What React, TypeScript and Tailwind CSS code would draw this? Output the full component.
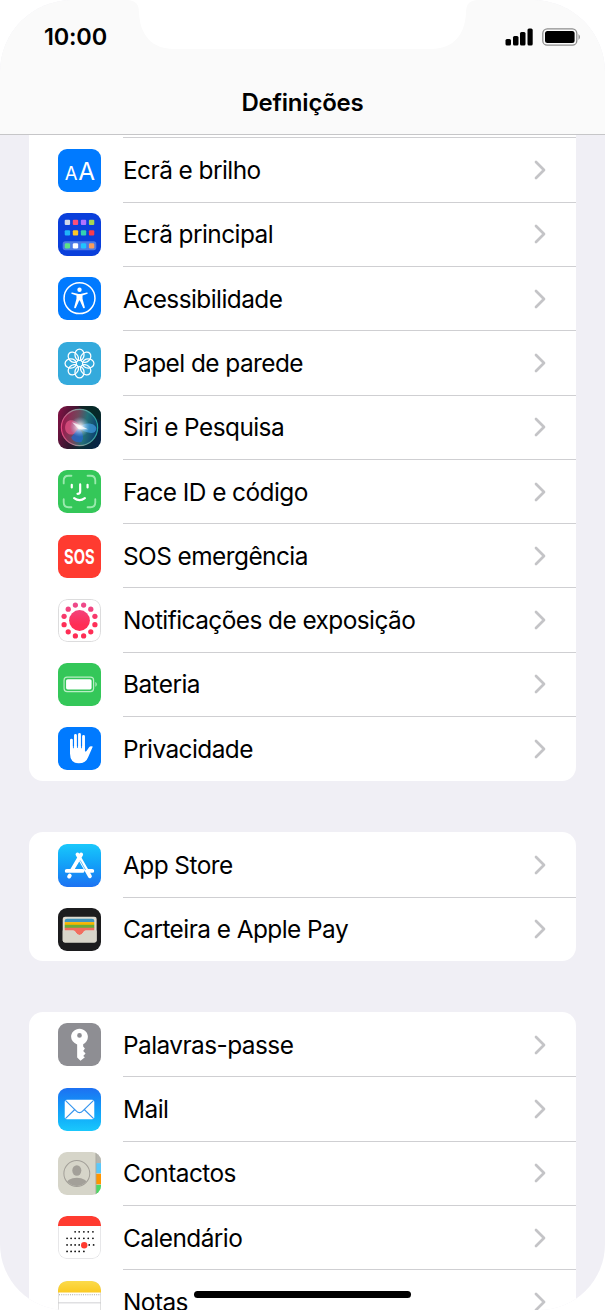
import type { ReactNode } from "react";

function Icon({ children, className = "" }: { children: ReactNode; className?: string }) {
  return (
    <svg viewBox="0 0 128 128" className={`mt-[1.4px] w-[43px] h-[43px] shrink-0 rounded-[9px] ${className}`}>
      {children}
    </svg>
  );
}

function DisplayIcon() {
  return (
    <Icon className="bg-[#007aff]">
      <g fill="#fff" fontFamily="Inter, sans-serif">
        <text x="20" y="91" fontSize="55" textLength="38" lengthAdjust="spacingAndGlyphs">A</text>
        <text x="60" y="91" fontSize="74" textLength="50" lengthAdjust="spacingAndGlyphs">A</text>
      </g>
    </Icon>
  );
}

function HomeScreenIcon() {
  const rows = [
    ["#d0d7e8", "#f8507a", "#b072ff", "#a4d552"],
    ["#20b4fa", "#fcc527", "#35d1b0", "#f83b4c"],
  ];
  return (
    <Icon className="bg-[#0a3fdb]">
      {rows.map((row, y) =>
        row.map((color, x) => (
          <rect key={color} x={20 + x * 24} y={20 + y * 31} width="16" height="16" rx="3" fill={color} />
        ))
      )}
      <rect x="14" y="84" width="100" height="27" rx="8" fill="#4b79e8" />
      <rect x="20" y="90" width="16" height="16" rx="4" fill="#5fe385" />
      <rect x="44" y="90" width="16" height="16" rx="4" fill="#fff" />
      <rect x="68" y="90" width="16" height="16" rx="4" fill="#20c4ff" />
      <rect x="92" y="90" width="16" height="16" rx="4" fill="#fa9d5c" />
    </Icon>
  );
}

function AccessibilityIcon() {
  return (
    <Icon className="bg-[#007aff]">
      <circle cx="64" cy="63" r="46" fill="none" stroke="#fff" strokeWidth="4.5" />
      <circle cx="64" cy="38" r="6.5" fill="#fff" />
      <path
        d="M42 46 L58 50 Q64 51 70 50 L86 46 Q90 46 88 50 L73 55 V65 L80 91 Q79 95 75 92 L65 70 H63 L53 92 Q49 95 48 91 L55 65 V55 L40 50 Q38 46 42 46Z"
        fill="#fff"
      />
    </Icon>
  );
}

function WallpaperIcon() {
  const angles = [0, 45, 90, 135, 180, 225, 270, 315];
  return (
    <Icon className="bg-[#34aadc]">
      {angles.map((a) => (
        <ellipse
          key={a}
          cx="64"
          cy="38"
          rx="13.5"
          ry="17"
          transform={`rotate(${a} 64 64)`}
          fill="none"
          stroke="#fff"
          strokeWidth="3.8"
        />
      ))}
    </Icon>
  );
}

function SiriIcon() {
  return (
    <Icon>
      <defs>
        <linearGradient id="siriBg" x1="0" y1="0.3" x2="1" y2="0.6">
          <stop offset="0" stopColor="#7a1242" />
          <stop offset="0.4" stopColor="#33172f" />
          <stop offset="0.65" stopColor="#0b2e35" />
          <stop offset="1" stopColor="#072546" />
        </linearGradient>
        <linearGradient id="siriRing" x1="0" y1="0.5" x2="1" y2="0.4">
          <stop offset="0" stopColor="#e0487e" />
          <stop offset="0.45" stopColor="#8a9c9c" />
          <stop offset="1" stopColor="#23a6a2" />
        </linearGradient>
        <linearGradient id="siriOrb" x1="0" y1="0.4" x2="1" y2="0.6">
          <stop offset="0" stopColor="#a0174e" />
          <stop offset="0.4" stopColor="#70485c" />
          <stop offset="0.65" stopColor="#237078" />
          <stop offset="1" stopColor="#0a3d70" />
        </linearGradient>
        <radialGradient id="siriGlow">
          <stop offset="0" stopColor="#fff" />
          <stop offset="0.3" stopColor="#fff" stopOpacity="0.65" />
          <stop offset="1" stopColor="#8cf" stopOpacity="0" />
        </radialGradient>
      </defs>
      <rect width="128" height="128" fill="url(#siriBg)" />
      <path d="M60 0 H128 V45 Q90 20 60 0Z" fill="#052a22" opacity="0.7" />
      <circle cx="64" cy="64" r="54" fill="url(#siriOrb)" stroke="url(#siriRing)" strokeWidth="3.5" />
      <path d="M68 64 C52 34 22 36 21 63 C21 92 55 92 68 64Z" fill="#f2588c" opacity="0.65" />
      <path d="M60 64 C82 44 114 52 114 67 C113 88 82 82 60 64Z" fill="#46a5ee" opacity="0.65" />
      <path d="M62 65 Q83 90 70 107 Q48 112 39 94Z" fill="#2268ce" opacity="0.75" />
      <circle cx="65" cy="62" r="30" fill="url(#siriGlow)" />
      <path d="M42 48 L67 58 L89 69 L62 69Z" fill="#fff" opacity="0.75" />
    </Icon>
  );
}

function FaceIdIcon() {
  return (
    <Icon className="bg-[#34c759]">
      <path
        d="M17 40 V31 Q17 17 31 17 H40 M88 17 H97 Q111 17 111 31 V40 M111 87 V96 Q111 111 97 111 H88 M40 111 H31 Q17 111 17 96 V87"
        fill="none"
        stroke="#9beaae"
        strokeWidth="5.5"
        strokeLinecap="round"
      />
      <path
        d="M41 44 V52 M88 44 V52 M66 43 V64 Q66 71 58 71 M48 84 Q64 96 80 84"
        fill="none"
        stroke="#fff"
        strokeWidth="6.5"
        strokeLinecap="round"
      />
    </Icon>
  );
}

function SosIcon() {
  return (
    <Icon className="bg-[#ff3b30]">
      <text
        x="18"
        y="85"
        fontSize="59"
        fontWeight="700"
        fill="#fff"
        fontFamily="Inter, sans-serif"
        textLength="91"
        lengthAdjust="spacingAndGlyphs"
      >
        SOS
      </text>
    </Icon>
  );
}

function ExposureIcon() {
  const dots = Array.from({ length: 12 }, (_, i) => ((i * 30 + 15) * Math.PI) / 180);
  return (
    <Icon>
      <defs>
        <linearGradient id="exposure" x1="0" y1="0" x2="0" y2="128" gradientUnits="userSpaceOnUse">
          <stop offset="0.1" stopColor="#ed4b8d" />
          <stop offset="0.6" stopColor="#ff2d55" />
        </linearGradient>
      </defs>
      <rect x="1.5" y="1.5" width="125" height="125" rx="26" fill="#fff" stroke="#d5d5d7" strokeWidth="2.5" />
      <g fill="url(#exposure)">
        <circle cx="64" cy="64" r="31" />
        {dots.map((a) => (
          <circle key={a} cx={64 + 47.5 * Math.cos(a)} cy={64 + 47.5 * Math.sin(a)} r="7.8" />
        ))}
      </g>
    </Icon>
  );
}

function BatteryIcon() {
  return (
    <Icon className="bg-[#34c759]">
      <rect x="18" y="42" width="88" height="43" rx="9" fill="none" stroke="#b9eec5" strokeWidth="3.5" />
      <rect x="24" y="48" width="76" height="31" rx="5" fill="#fff" />
      <path d="M112 57 Q118 63 112 70Z" fill="#b9eec5" stroke="#b9eec5" />
    </Icon>
  );
}

function PrivacyIcon() {
  return (
    <Icon className="bg-[#007aff]">
      <path
        d="M40 39 V66 M52 25 V66 M64 22 V66 M76 28 V66"
        fill="none"
        stroke="#fff"
        strokeWidth="8.5"
        strokeLinecap="round"
      />
      <path
        d="M35.7 57 H80.2 V73 Q84 74 86 70 L92 61 Q96 55 103 58 Q104 59 102 62 L90 89 Q83 108 62 108 Q36 108 35.7 79Z"
        fill="#fff"
      />
      <path d="M46 42 V62 M58 32 V61 M70 34 V62" stroke="#007aff" strokeWidth="2.5" strokeLinecap="round" />
    </Icon>
  );
}

function AppStoreIcon() {
  return (
    <Icon className="bg-linear-to-b from-[#1bc8fb] to-[#1d72f2]">
      <g fill="none" stroke="#fff" strokeWidth="11.5" strokeLinecap="round">
        <path d="M69 31 L42 77 M58 31 L95 96 M26 80 H73 M90 80 H102 M35 94 L33 97" />
      </g>
      <path d="M66 49 L82 77" stroke="#1ba4f7" strokeWidth="2" />
    </Icon>
  );
}

function WalletIcon() {
  return (
    <Icon className="bg-[#1c1c1e]">
      <rect x="14" y="26" width="101" height="77" rx="7" fill="#dedbd1" />
      <path d="M20 42 V38 Q20 32 27 32 H101 Q108 32 108 38 V42Z" fill="#4196be" />
      <rect x="20" y="42" width="88" height="9" fill="#f7b500" />
      <rect x="20" y="50" width="88" height="10" fill="#69ae38" />
      <path d="M20 59 H108 V67 H83 Q77 67 75 73 Q64 88 53 73 Q51 67 45 67 H20Z" fill="#f26d5f" />
      <path d="M14 67 H45 Q51 67 53 73 Q64 88 75 73 Q77 67 83 67 H115 V96 Q115 103 108 103 H21 Q14 103 14 96Z" fill="#d8d5ca" />
    </Icon>
  );
}

function PasswordsIcon() {
  return (
    <Icon className="bg-[#8e8e93]">
      <path
        fillRule="evenodd"
        d="M64 17 C78 17 89 28 89 41 C89 51 83 59 75 63 V70 L80 76 L75 83 L82 91 L75 98 L80 102 L67 112 L57 103 V64 C46 59 39 51 39 41 C39 28 50 17 64 17Z M64 30 A7 7 0 1 0 64 44 A7 7 0 1 0 64 30Z"
        fill="#fff"
      />
    </Icon>
  );
}

function MailIcon() {
  return (
    <Icon className="bg-linear-to-b from-[#1d70f2] to-[#1ac8fc]">
      <rect x="20" y="35" width="88" height="58" rx="6" fill="#fff" />
      <path
        d="M22 37 L54 68 Q64 78 74 68 L106 37 M22 91 L50 64 M106 91 L78 64"
        fill="none"
        stroke="#3595ee"
        strokeWidth="3.5"
      />
    </Icon>
  );
}

function ContactsIcon() {
  return (
    <Icon className="bg-[#d6d5c9]">
      <defs>
        <clipPath id="person">
          <circle cx="56" cy="64" r="37" />
        </clipPath>
      </defs>
      <rect x="113" width="15" height="33" fill="#b5b4ad" />
      <rect x="113" y="33" width="15" height="30" fill="#5ac8fa" />
      <rect x="113" y="65" width="15" height="31" fill="#ff9500" />
      <rect x="113" y="98" width="15" height="30" fill="#4cd964" />
      <path d="M113 0 V128" stroke="#a9a89e" strokeWidth="2.5" />
      <circle cx="56" cy="64" r="38.5" fill="none" stroke="#a3a099" strokeWidth="3" />
      <g fill="#a3a099" clipPath="url(#person)">
        <ellipse cx="56" cy="55" rx="13.5" ry="15.5" />
        <ellipse cx="56" cy="96" rx="33" ry="19" />
      </g>
    </Icon>
  );
}

function CalendarIcon() {
  const weeks = [
    [48, 60, 74, 87, 101],
    [24, 36, 48, 60, 74, 87, 101],
    [24, 36, 48, 60, 90, 103],
    [24, 36, 48, 60, 74],
  ];
  return (
    <Icon>
      <rect x="1" y="1" width="126" height="126" rx="26" fill="#fff" stroke="#dedee0" strokeWidth="2.5" />
      <path d="M0 30 V27 Q0 0 27 0 H101 Q128 0 128 27 V30Z" fill="#ff3b30" />
      {weeks.map((week, row) =>
        week.map((x) => <circle key={`${row}-${x}`} cx={x + 3} cy={47 + row * 19.5} r="2.7" fill="#111" />)
      )}
      <circle cx="78" cy="87" r="9.5" fill="#ff3b30" />
    </Icon>
  );
}

function NotesIcon() {
  return (
    <Icon>
      <defs>
        <linearGradient id="notes" x1="0" y1="0" x2="0" y2="1">
          <stop offset="0" stopColor="#fbdb4c" />
          <stop offset="1" stopColor="#fbca22" />
        </linearGradient>
      </defs>
      <rect x="1" y="1" width="126" height="126" rx="26" fill="#fff" stroke="#d4d4d4" strokeWidth="2.5" />
      <path d="M0 34 V27 Q0 0 27 0 H101 Q128 0 128 27 V34Z" fill="url(#notes)" />
      <path d="M3 41 H127" stroke="#a6a6a6" strokeWidth="3" strokeDasharray="3 3.5" />
      <path d="M0 65 H128 M0 94 H128" stroke="#c8c8ca" strokeWidth="2.5" />
    </Icon>
  );
}

function Row({ icon, label, line = true }: { icon: ReactNode; label: string; line?: boolean }) {
  return (
    <div className="flex h-[64.3px] shrink-0 items-center pl-[29px]">
      {icon}
      <div
        className={`ml-[22px] flex h-full flex-1 items-center justify-between border-t pr-[30px] ${
          line ? "border-[#cfcfd2]" : "border-transparent"
        }`}
      >
        <span className="whitespace-nowrap text-[24.4px] leading-8 tracking-[-0.55px]">{label}</span>
        <svg viewBox="0 0 12 20" className="h-5 w-3">
          <path d="M2 2 L10 10 L2 18" fill="none" stroke="#c4c4c7" strokeWidth="2.7" strokeLinecap="round" strokeLinejoin="round" />
        </svg>
      </div>
    </div>
  );
}

function Header() {
  return (
    <header className="relative h-[135px] shrink-0 border-b border-[#c6c6c8] bg-[#fafafa]">
      <svg viewBox="0 0 349 50" className="absolute left-[128px] top-0 h-[50px] w-[349px]">
        <path
          d="M0 0 C8 1 11 4 11 13 C12 35 24 49 46 49 H303 C325 49 337 35 338 13 C338 4 341 1 349 0Z"
          fill="#fff"
        />
      </svg>
      <div className="flex items-center justify-between pl-[44px] pr-[24px] pt-[20.5px]">
        <span className="text-[23.5px] font-semibold leading-8 tracking-[-0.2px]">10:00</span>
        <div className="flex items-center gap-[9px]">
          <svg viewBox="0 0 28 18" className="h-[18px] w-7">
            <rect x="0.5" y="11" width="5.5" height="6.5" rx="1.5" />
            <rect x="8" y="8" width="5.5" height="9.5" rx="1.5" />
            <rect x="15" y="4" width="5.5" height="13.5" rx="1.5" />
            <rect x="22.5" y="0.5" width="5.2" height="17" rx="1.5" />
          </svg>
          <svg viewBox="0 0 39 18" className="h-[18px] w-[39px]">
            <rect x="0.8" y="0.8" width="34" height="16.4" rx="4.5" fill="none" stroke="#8d8d8d" strokeWidth="1.3" />
            <rect x="3" y="3" width="29.6" height="12" rx="2.5" />
            <path d="M36.5 6 Q39.5 9 36.5 12Z" fill="#8d8d8d" />
          </svg>
        </div>
      </div>
      <h1 className="mt-[34.5px] text-center text-[24px] font-semibold leading-8 tracking-[-0.2px]">Definições</h1>
    </header>
  );
}

export default function App() {
  return (
    <div className="h-[1310px] w-[605px] overflow-hidden bg-white font-[Inter,sans-serif] text-black">
      <div className="relative flex h-full flex-col overflow-hidden rounded-t-[72px] rounded-b-[66px] bg-[#f0eff5]">
        <Header />
        <main className="flex flex-col px-[29px]">
          <section className="rounded-b-[14px] bg-white pb-[0.5px] pt-[2.4px]">
            <Row icon={<DisplayIcon />} label="Ecrã e brilho" />
            <Row icon={<HomeScreenIcon />} label="Ecrã principal" />
            <Row icon={<AccessibilityIcon />} label="Acessibilidade" />
            <Row icon={<WallpaperIcon />} label="Papel de parede" />
            <Row icon={<SiriIcon />} label="Siri e Pesquisa" />
            <Row icon={<FaceIdIcon />} label="Face ID e código" />
            <Row icon={<SosIcon />} label="SOS emergência" />
            <Row icon={<ExposureIcon />} label="Notificações de exposição" />
            <Row icon={<BatteryIcon />} label="Bateria" />
            <Row icon={<PrivacyIcon />} label="Privacidade" />
          </section>

          <section className="mt-[51.5px] rounded-[14px] bg-white">
            <Row icon={<AppStoreIcon />} label="App Store" line={false} />
            <Row icon={<WalletIcon />} label="Carteira e Apple Pay" />
          </section>

          <section className="mt-[51.2px] rounded-t-[14px] bg-white">
            <Row icon={<PasswordsIcon />} label="Palavras-passe" line={false} />
            <Row icon={<MailIcon />} label="Mail" />
            <Row icon={<ContactsIcon />} label="Contactos" />
            <Row icon={<CalendarIcon />} label="Calendário" />
            <Row icon={<NotesIcon />} label="Notas" />
          </section>
        </main>
        {/* Home indicator */}
        <div className="absolute left-[194px] top-[1291px] h-[7px] w-[217px] rounded-full bg-black" />
      </div>
    </div>
  );
}
